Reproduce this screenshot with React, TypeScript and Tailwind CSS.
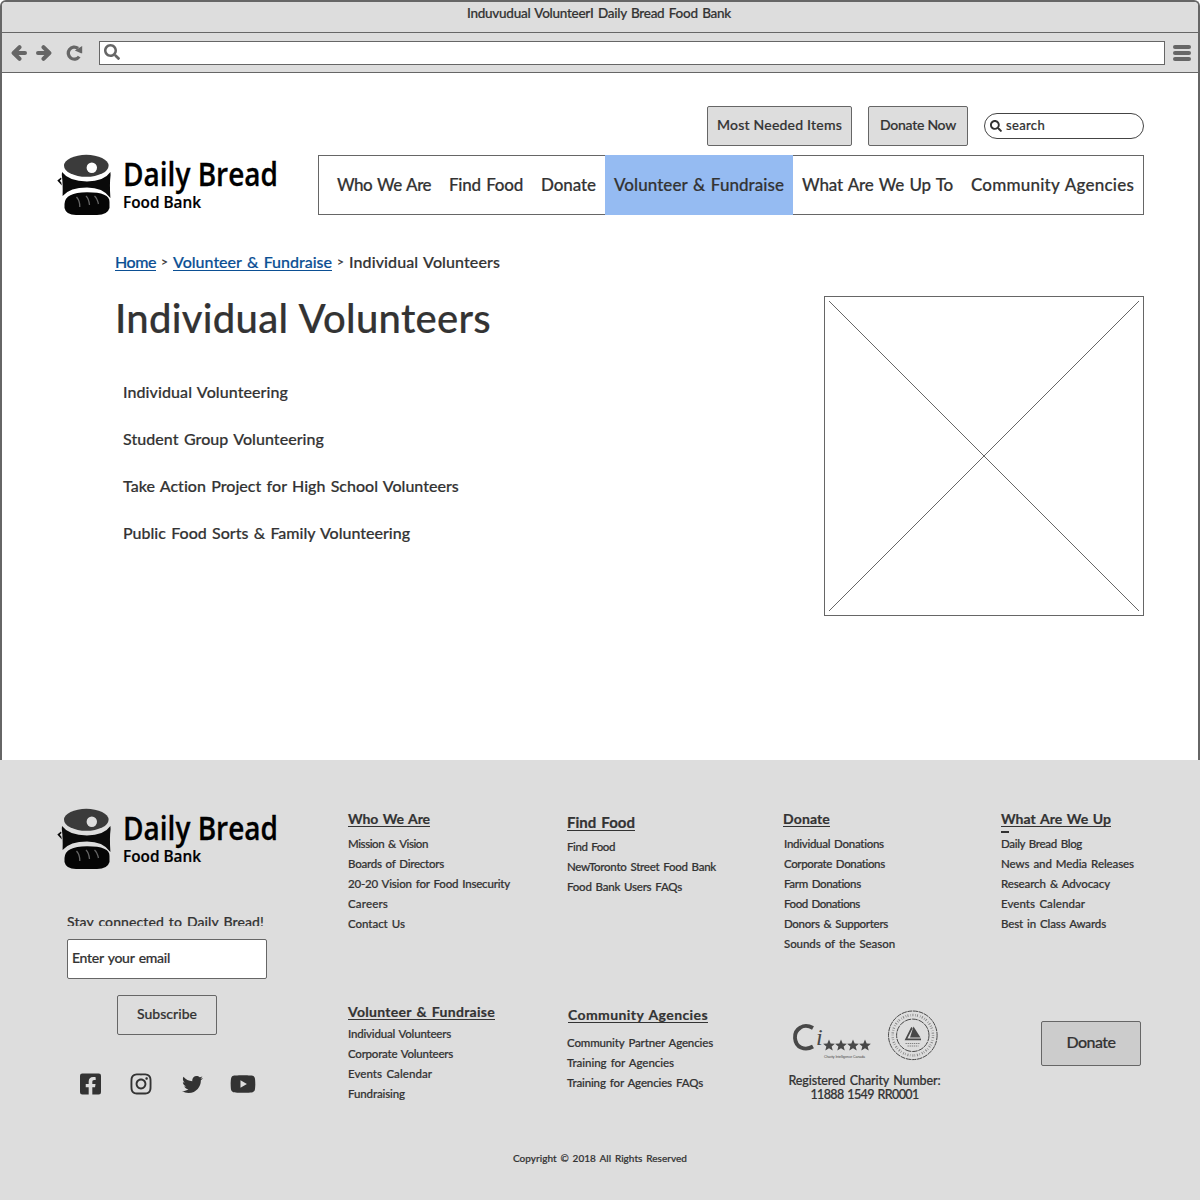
import { useLayoutEffect, useRef, useState } from "react";
import { FaFacebookSquare, FaInstagram, FaSearch, FaTwitter, FaYoutube } from "react-icons/fa";

/* One line of text, tracked so that it fills the given width. */
function Fit({ w, className = "", children }: { w: number; className?: string; children: string }) {
  const ref = useRef<HTMLSpanElement>(null);
  const [tracking, setTracking] = useState(0);
  useLayoutEffect(() => {
    const el = ref.current;
    if (!el) return;
    el.style.letterSpacing = "0px";
    const natural = el.getBoundingClientRect().width;
    setTracking((w - natural) / children.length);
  }, [w, children]);
  return (
    <span ref={ref} className={`inline-block whitespace-pre ${className}`} style={{ letterSpacing: `${tracking}px` }}>
      {children}
    </span>
  );
}

function Logo() {
  return (
    <svg width="226" height="64" viewBox="0 0 226 64" className="block shrink-0 [word-spacing:0]" fontFamily="'Open Sans', sans-serif">
      <ellipse cx="29.3" cy="11.8" rx="22.3" ry="11" fill="#3b3b3b" />
      <circle cx="34.8" cy="13.8" r="5.2" className="fill-white" />
      <path d="M5 18Q12 27.4 30 27.4Q47 27.4 53.4 18L53.6 21Q52.4 30 53.4 44Q46 33.6 30 33.6Q13 33.6 5.6 42Q6 30 4.8 21Z" fill="#0a0a0a" />
      <path d="M4 23.500L0.300 26.600L4.800 31.500L4.300 28.500L2.800 26.800L4.500 25Z" fill="#0a0a0a" />
      <path d="M7.500 50Q8 38.300 30 38.300Q53 38.300 52.500 48V54Q50.500 61 40 61H19Q9 61 7.500 54Z" fill="#050505" />
      <path d="M19.500 43Q23 47 22.800 53M29 42Q32 45 32.500 51M37.500 42Q40 44 41.500 50" fill="none" stroke="#666" strokeWidth="1.3" />
      <text x="66" y="32" fontSize="33" fontWeight="600" textLength="155" lengthAdjust="spacingAndGlyphs" stroke="#000" strokeWidth="0.3">Daily Bread</text>
      <text x="66" y="54" fontSize="15.500" fontWeight="600" textLength="78" lengthAdjust="spacingAndGlyphs" stroke="#000" strokeWidth="0.2">Food Bank</text>
    </svg>
  );
}

const nav: [string, number][] = [
  ["Who We Are", 94],
  ["Find Food", 74],
  ["Donate", 55],
  ["Volunteer & Fundraise", 170],
  ["What Are We Up To", 151],
  ["Community Agencies", 163],
];

const topics: [string, number][] = [
  ["Individual Volunteering", 165],
  ["Student Group Volunteering", 201],
  ["Take Action Project for High School Volunteers", 336],
  ["Public Food Sorts & Family Volunteering", 287],
];

function Heading({ w, children, className = "text-[14px]" }: { w: number; children: string; className?: string }) {
  return (
    <h3 className={`h-5 font-bold leading-5 ${className}`}>
      <Fit w={w} className="underline decoration-1 underline-offset-2 [text-decoration-skip-ink:none]">{children}</Fit>
    </h3>
  );
}

function Links({ items, className = "" }: { items: [string, number][]; className?: string }) {
  return (
    <ul className={`text-[11.5px] leading-5 ${className}`}>
      {items.map(([label, w]) => (
        <li key={label} className="h-5">
          <Fit w={w}>{label}</Fit>
        </li>
      ))}
    </ul>
  );
}

function Arrow({ className = "" }: { className?: string }) {
  return (
    <svg width="16" height="16" viewBox="0 0 16 16" className={className}>
      <path d="M8.500 2.200L2.600 8L8.500 13.800M3.500 8H14" fill="none" stroke="currentColor" strokeWidth="4" strokeLinecap="round" strokeLinejoin="round" />
    </svg>
  );
}

function BrowserChrome() {
  return (
    <div className="bg-[#ddd] text-[#666]">
      <div className="h-[30px] pl-[465px] text-[13.5px] leading-[23px] text-[#333]">
        <Fit w={264}>Induvudual VolunteerI Daily Bread Food Bank</Fit>
      </div>
      <div className="flex h-[41px] items-center border-y border-[#666] pl-[9px]">
        <Arrow />
        <Arrow className="ml-[9px] rotate-180" />
        <svg width="17" height="16" viewBox="0 0 17 16" className="ml-[14px]">
          <path d="M13.200 11.600A6 6 0 1 1 12 3.400" fill="none" stroke="currentColor" strokeWidth="3.300" />
          <path d="M16.200 1V8.200H15L8.800 5.600Z" fill="currentColor" />
        </svg>
        <div className="ml-4 flex h-6 w-[1066px] items-center border border-[#666] bg-white pl-1">
          <FaSearch className="mb-0.5 size-4" />
        </div>
        <div className="ml-2 flex w-[18px] flex-col gap-0.5">
          <i className="h-1 rounded-full bg-[#666]" />
          <i className="h-1 rounded-full bg-[#666]" />
          <i className="h-1 rounded-full bg-[#666]" />
        </div>
      </div>
    </div>
  );
}

function Header() {
  return (
    <header className="h-[142px] pr-[54px] pt-[33px]">
      <div className="flex items-center justify-end gap-4 text-[14px]">
        <button className="h-10 w-[145px] rounded-[2px] border border-[#666] bg-[#ddd] pb-1"><Fit w={125}>Most Needed Items</Fit></button>
        <button className="h-10 w-[100px] rounded-[2px] border border-[#666] bg-[#ddd] pb-1"><Fit w={76}>Donate Now</Fit></button>
        <div className="flex h-[26px] w-40 items-center rounded-full border border-[#444] pl-[5px] text-[13px]">
          <FaSearch className="mr-1 size-3" />
          <Fit w={39}>search</Fit>
        </div>
      </div>
      <div className="mt-[9px] flex justify-between pl-[55px]">
        <div className="-mt-px w-[226px]"><Logo /></div>
        <nav className="flex h-[60px] w-[826px] border border-[#666] pl-[9px] text-[17px]">
          {nav.map(([label, w]) => (
            <a key={label} className={`-my-px flex items-center px-[9px] ${label.startsWith("Volunteer") ? "bg-[#95bbf2]" : ""}`}>
              <Fit w={w}>{label}</Fit>
            </a>
          ))}
        </nav>
      </div>
    </header>
  );
}

function Content() {
  const link = "text-[#0b4f94] underline decoration-1 underline-offset-2";
  return (
    <main className="flex justify-between pl-[113px] pr-[54px]">
      <div className="pt-[37px]">
        <div className="flex text-[16px] leading-5">
          <Fit w={41} className={link}>Home</Fit>
          <span className="w-[17px] text-center text-[12px]">&gt;</span>
          <Fit w={159} className={link}>Volunteer &amp; Fundraise</Fit>
          <span className="w-[17px] text-center text-[12px]">&gt;</span>
          <Fit w={151}>Individual Volunteers</Fit>
        </div>
        <h1 className="mt-[22px] text-[40px] leading-[48px]"><Fit w={376}>Individual Volunteers</Fit></h1>
        <ul className="mt-[26px] pl-2 text-[16px] leading-[47px]">
          {topics.map(([label, w]) => (
            <li key={label} className="h-[47px]"><Fit w={w}>{label}</Fit></li>
          ))}
        </ul>
      </div>
      <svg width="320" height="320" className="mt-[81px] border border-[#666]" viewBox="1 1 318 318">
        <path d="M5 5L315 315M315 5L5 315" stroke="#666" strokeWidth="1" />
      </svg>
    </main>
  );
}

function CharityBadges() {
  const star = "M0-6.2L1.7-2.1L6-1.9L2.7.9L3.8 5.2L0 2.8L-3.8 5.2L-2.7.9L-6-1.9L-1.7-2.1Z";
  return (
    <svg width="148" height="52" viewBox="792 1010 148 52" className="block [word-spacing:0]" fill="#484848">
      <path d="M813 1028Q806 1024 800.5 1027.5Q794.5 1031 795 1038Q795.500 1045 801 1047.500Q807 1050 813 1046.500" fill="none" stroke="#484848" strokeWidth="3.8" />
      <text x="816" y="1045" fontFamily="'Liberation Serif', serif" fontStyle="italic" fontSize="24" textLength="7">i</text>
      {[829, 841, 853, 865].map((x) => (
        <path key={x} d={star} transform={`translate(${x} 1045.500) scale(.98)`} />
      ))}
      <text x="824" y="1057.500" fontFamily="'Liberation Sans', sans-serif" fontSize="3.500" textLength="41">Charity Intelligence Canada</text>
      <g fill="none" stroke="#484848">
        <circle cx="912.8" cy="1035.300" r="24.300" strokeWidth="1" strokeDasharray="5 .7" />
        <circle cx="912.8" cy="1035.300" r="16.200" strokeWidth="1" strokeDasharray="6 .8" />
        <circle cx="912.8" cy="1035.300" r="20.200" strokeWidth="2.500" strokeDasharray=".6 1.3 .9 2.1 .5 1.5 1 1.8" opacity=".6" />
        <path d="M912 1027.500L906 1039.300H921" strokeWidth="1.700" />
        <path d="M905.500 1043.500H920M907.500 1046H918.500" strokeWidth="1" strokeDasharray="1.400 .7" opacity=".6" />
      </g>
      <path d="M913.500 1026.500L920.500 1037.500H910Z" />
    </svg>
  );
}

function Footer() {
  return (
    <footer className="h-[440px] bg-[#ddd]">
      <div className="grid h-[390px] grid-cols-[348px_219px_216px_218px_199px]">
        <div className="pt-12">
          <div className="pl-[57px] [&_circle]:fill-[#ddd]"><Logo /></div>
          <div className="ml-[67px] mt-[43px] h-[11px] overflow-hidden text-[14px] leading-[14px]">
            <Fit w={197}>Stay connected to Daily Bread!</Fit>
          </div>
          <div className="ml-[67px] mt-[13px] h-10 w-[200px] rounded-[2px] border border-[#666] bg-white pl-1 text-[14px] leading-9">
            <Fit w={98}>Enter your email</Fit>
          </div>
          <button className="ml-[117px] mt-4 h-10 w-[100px] rounded-[2px] border border-[#666] pb-1 text-[14px]"><Fit w={60}>Subscribe</Fit></button>
          <div className="ml-[79.500px] mt-[37px] flex h-6 items-center">
            <FaFacebookSquare className="h-6 w-[21px]" />
            <FaInstagram className="ml-[28.500px] size-6" />
            <FaTwitter className="ml-[29px] size-[21px]" />
            <FaYoutube className="ml-[27px] size-[26px]" />
          </div>
        </div>
        <div className="pt-[49px]">
          <Heading w={82}>Who We Are</Heading>
          <Links className="mt-[5px]" items={[["Mission & Vision", 80], ["Boards of Directors", 96], ["20-20 Vision for Food Insecurity", 162], ["Careers", 40], ["Contact Us", 57]]} />
          <div className="mt-[68px]"><Heading w={147}>Volunteer &amp; Fundraise</Heading></div>
          <Links className="mt-0.5" items={[["Individual Volunteers", 103], ["Corporate Volunteers", 105], ["Events Calendar", 84], ["Fundraising", 57]]} />
        </div>
        <div className="pt-[52px]">
          <Heading w={68} className="text-[15px]">Find Food</Heading>
          <Links className="mt-[5px]" items={[["Find Food", 48], ["NewToronto Street Food Bank", 149], ["Food Bank Users FAQs", 115]]} />
          <div className="ml-px mt-[108px]"><Heading w={140}>Community Agencies</Heading></div>
          <Links className="mt-2" items={[["Community Partner Agencies", 146], ["Training for Agencies", 107], ["Training for Agencies FAQs", 136]]} />
        </div>
        <div className="pt-[49px]">
          <Heading w={47}>Donate</Heading>
          <Links className="ml-px mt-[5px]" items={[["Individual Donations", 100], ["Corporate Donations", 101], ["Farm Donations", 77], ["Food Donations", 76], ["Donors & Supporters", 104], ["Sounds of the Season", 111]]} />
          <div className="ml-[9px] mt-14"><CharityBadges /></div>
          <div className="ml-[5px] mt-[12px] w-[153px] text-center text-[12.500px] leading-[14px]">
            <Fit w={152} className="align-top">Registered Charity Number:</Fit>
            <Fit w={108} className="align-top">11888 1549 RR0001</Fit>
          </div>
        </div>
        <div className="pt-[49px]">
          <Heading w={110}>What Are We Up</Heading>
          <div className="mt-[2px] h-[2px] w-2 bg-[#333]" />
          <Links className="mt-px" items={[["Daily Bread Blog", 81], ["News and Media Releases", 133], ["Research & Advocacy", 109], ["Events Calendar", 84], ["Best in Class Awards", 105]]} />
          <button className="ml-10 mt-[87px] h-[45px] w-[100px] rounded-[2px] border border-[#666] bg-[#ccc] pb-1 text-[16px]"><Fit w={49}>Donate</Fit></button>
        </div>
      </div>
      <p className="text-center text-[10px] leading-[17px]"><Fit w={174}>Copyright © 2018 All Rights Reserved</Fit></p>
    </footer>
  );
}

export default function App() {
  return (
    <div className="h-[1200px] w-[1200px] overflow-hidden bg-white font-['Lato',sans-serif] font-medium text-[#333] [word-spacing:0.08em] [-webkit-text-stroke:0.2px]">
      <div className="h-[760px] overflow-hidden rounded-t-[6px] border-x-2 border-t-2 border-[#666]">
        <BrowserChrome />
        <Header />
        <Content />
      </div>
      <Footer />
    </div>
  );
}
